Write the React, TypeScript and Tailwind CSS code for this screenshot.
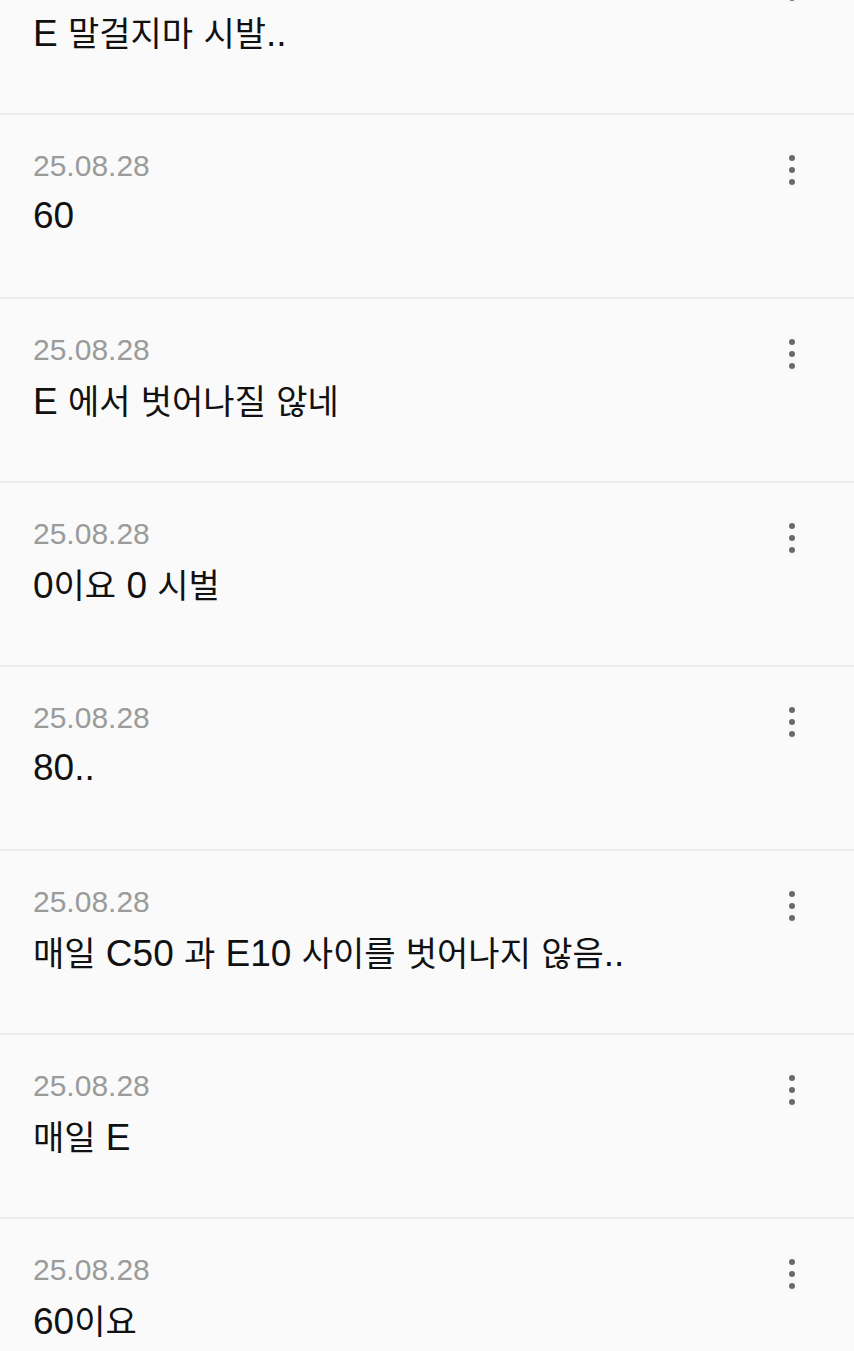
import React from 'react';

const memos = [
  { date: '25.08.28', text: 'E 말걸지마 시발..' },
  { date: '25.08.28', text: '60' },
  { date: '25.08.28', text: 'E 에서 벗어나질 않네' },
  { date: '25.08.28', text: '0이요 0 시벌' },
  { date: '25.08.28', text: '80..' },
  { date: '25.08.28', text: '매일 C50 과 E10 사이를 벗어나지 않음..' },
  { date: '25.08.28', text: '매일 E' },
  { date: '25.08.28', text: '60이요' },
];

// hangul runs are set a bit smaller so they sit like the phone's font
const MemoText = ({ text }: { text: string }) => (
  <>
    {text.split(/([가-힣]+)/).map((part, i) =>
      /[가-힣]/.test(part) ? (
        <span key={i} className="text-[34px] font-['Noto_Sans_CJK_KR',sans-serif]">
          {part}
        </span>
      ) : (
        <span key={i}>{part}</span>
      )
    )}
  </>
);

const MoreDots = () => (
  <div className="flex flex-col gap-[6px] mt-[40px] mr-[59px]">
    <span className="w-[6px] h-[6px] rounded-full bg-[#6b6b6b]" />
    <span className="w-[6px] h-[6px] rounded-full bg-[#6b6b6b]" />
    <span className="w-[6px] h-[6px] rounded-full bg-[#6b6b6b]" />
  </div>
);

const App = () => {
  return (
    <div className="w-[854px] h-[1351px] overflow-hidden bg-[#fafafa]">
      <ul className="-mt-[69px]">
        {memos.map((memo, i) => (
          <li
            key={i}
            className="flex justify-between items-start h-[184px] border-b-2 border-[#ececec]"
          >
            <div className="pl-[33px] pt-[35px]">
              <div className="text-[30px] leading-[32px] text-[#9b9b9b] font-['Liberation_Sans',sans-serif]">
                {memo.date}
              </div>
              <div className="mt-[12px] text-[37px] leading-[44px] text-[#111] font-['Liberation_Sans','Noto_Sans_CJK_KR',sans-serif]">
                <MemoText text={memo.text} />
              </div>
            </div>
            <MoreDots />
          </li>
        ))}
      </ul>
    </div>
  );
};

export default App;
